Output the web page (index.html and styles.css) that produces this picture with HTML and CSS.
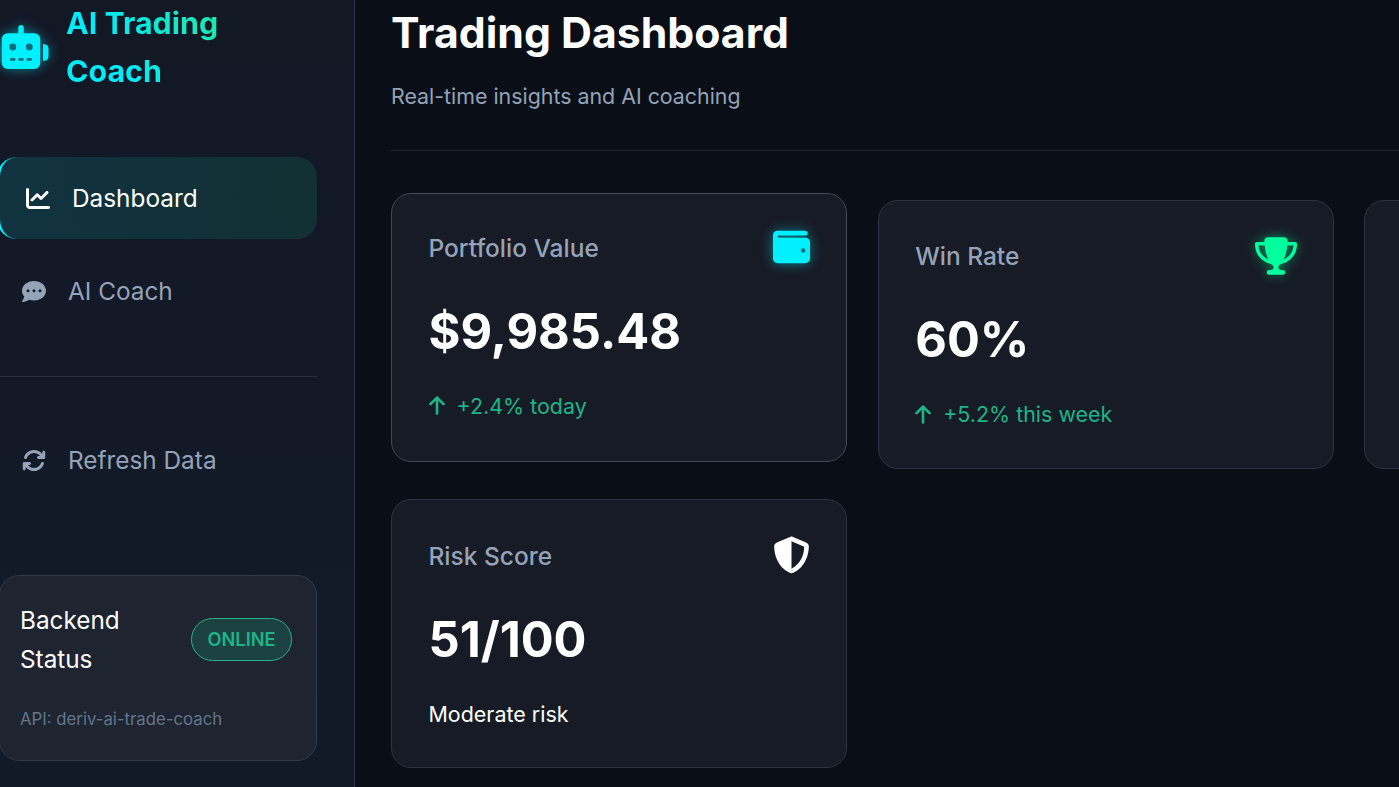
FILE: index.html
```html
<!DOCTYPE html>
<html>
	<head>
		<meta charset="UTF-8">
		<title>AI Trading Coach</title>
		<link rel="stylesheet" href="styles.css">
	</head>
	<body>
		<div class="app">
			<aside class="sidebar">
				<div class="logo">
					<svg class="logo-icon" viewBox="0 0 640 512"><path d="M320 0c17.7 0 32 14.3 32 32V96H472c39.8 0 72 32.2 72 72V440c0 39.8-32.2 72-72 72H168c-39.8 0-72-32.2-72-72V168c0-39.8 32.2-72 72-72H288V32c0-17.7 14.3-32 32-32zM208 384c-8.8 0-16 7.2-16 16s7.2 16 16 16h32c8.8 0 16-7.2 16-16s-7.2-16-16-16H208zm96 0c-8.8 0-16 7.2-16 16s7.2 16 16 16h32c8.8 0 16-7.2 16-16s-7.2-16-16-16H304zm96 0c-8.8 0-16 7.2-16 16s7.2 16 16 16h32c8.8 0 16-7.2 16-16s-7.2-16-16-16H400zM264 256a40 40 0 1 0 -80 0 40 40 0 1 0 80 0zm152 40a40 40 0 1 0 0-80 40 40 0 1 0 0 80zM48 224H64V416H48c-26.5 0-48-21.5-48-48V272c0-26.5 21.5-48 48-48zm544 0c26.5 0 48 21.5 48 48v96c0 26.5-21.5 48-48 48H576V224h16z"/></svg>
					<span class="logo-text">AI Trading Coach</span>
				</div>
				<nav class="nav">
					<a class="nav-item active">
						<svg class="nav-icon" viewBox="0 0 512 512"><path d="M64 64c0-17.7-14.3-32-32-32S0 46.3 0 64V400c0 44.2 35.8 80 80 80H480c17.7 0 32-14.3 32-32s-14.3-32-32-32H80c-8.8 0-16-7.2-16-16V64zm406.6 86.6c12.5-12.5 12.5-32.8 0-45.3s-32.8-12.5-45.3 0L320 210.7l-57.4-57.4c-12.5-12.5-32.8-12.5-45.3 0l-112 112c-12.5 12.5-12.5 32.8 0 45.3s32.8 12.5 45.3 0L240 221.3l57.4 57.4c12.5 12.5 32.8 12.5 45.3 0l128-128z"/></svg>
						Dashboard
					</a>
					<a class="nav-item">
						<svg class="nav-icon" viewBox="0 0 512 512"><path d="M256 448c141.4 0 256-93.1 256-208S397.4 32 256 32S0 125.1 0 240c0 45.1 17.7 86.8 47.7 120.9c-1.9 24.5-11.4 46.3-21.4 62.9c-5.5 9.2-11.1 16.6-15.2 21.6c-2.1 2.5-3.7 4.4-4.9 5.7c-.6 .6-1 1.1-1.3 1.4l-.3 .3 0 0 0 0 0 0 0 0c-4.6 4.6-5.9 11.4-3.4 17.4c2.5 6 8.3 9.9 14.8 9.9c28.7 0 57.6-8.9 81.6-19.3c22.9-9.9 42.4-21.9 54.3-30.6c31.8 11.5 67 17.9 104.1 17.9zM128 208a32 32 0 1 1 0 64 32 32 0 1 1 0-64zm128 0a32 32 0 1 1 0 64 32 32 0 1 1 0-64zm96 32a32 32 0 1 1 64 0 32 32 0 1 1 -64 0z"/></svg>
						AI Coach
					</a>
				</nav>
				<div class="divider"></div>
				<a class="nav-item refresh">
					<svg class="nav-icon" viewBox="0 0 512 512"><path d="M105.1 202.6c7.7-21.8 20.2-42.3 37.8-59.8c62.5-62.5 163.8-62.5 226.3 0L386.3 160H352c-17.7 0-32 14.3-32 32s14.3 32 32 32H463.5c0 0 0 0 0 0h.4c17.7 0 32-14.3 32-32V80c0-17.7-14.3-32-32-32s-32 14.3-32 32v35.2L414.4 97.6c-87.5-87.5-229.3-87.5-316.8 0C73.2 122 55.6 150.7 44.8 181.4c-5.9 16.7 2.9 34.9 19.5 40.8s34.9-2.9 40.8-19.5zM39 289.3c-5 1.5-9.8 4.2-13.7 8.2c-4 4-6.7 8.8-8.1 14c-.3 1.2-.6 2.5-.8 3.8c-.3 1.7-.4 3.4-.4 5.1V432c0 17.7 14.3 32 32 32s32-14.3 32-32V396.9l17.6 17.5 0 0c87.5 87.4 229.3 87.4 316.7 0c24.4-24.4 42.1-53.1 52.9-83.7c5.9-16.7-2.9-34.9-19.5-40.8s-34.9 2.9-40.8 19.5c-7.7 21.8-20.2 42.3-37.8 59.8c-62.5 62.5-163.8 62.5-226.3 0l-.1-.1L125.6 352H160c17.7 0 32-14.3 32-32s-14.3-32-32-32H48.4c-1.6 0-3.2 .1-4.8 .3s-3.1 .5-4.6 1z"/></svg>
					Refresh Data
				</a>
				<div class="status-card">
					<div class="status-top">
						<span class="status-title">Backend Status</span>
						<span class="badge">ONLINE</span>
					</div>
					<div class="status-api">API: deriv-ai-trade-coach</div>
				</div>
			</aside>
			<main class="main">
				<header class="page-head">
					<h1>Trading Dashboard</h1>
					<p>Real-time insights and AI coaching</p>
				</header>
				<section class="cards">
					<div class="card lifted">
						<div class="card-top">
							<span class="card-label">Portfolio Value</span>
							<svg class="card-icon cyan" viewBox="0 0 512 512"><path d="M64 32C28.7 32 0 60.7 0 96V416c0 35.3 28.7 64 64 64H448c35.3 0 64-28.7 64-64V192c0-35.3-28.7-64-64-64H80c-8.8 0-16-7.2-16-16s7.2-16 16-16H448c17.7 0 32-14.3 32-32s-14.3-32-32-32H64zM416 272a32 32 0 1 1 0 64 32 32 0 1 1 0-64z"/></svg>
						</div>
						<div class="card-value">$9,985.48</div>
						<div class="card-change">
							<svg class="arrow" viewBox="0 0 384 512"><path d="M214.6 41.4c-12.5-12.5-32.8-12.5-45.3 0l-160 160c-12.5 12.5-12.5 32.8 0 45.3s32.8 12.5 45.3 0L160 141.2V448c0 17.7 14.3 32 32 32s32-14.3 32-32V141.2L329.4 246.6c12.5 12.5 32.8 12.5 45.3 0s12.5-32.8 0-45.3l-160-160z"/></svg>
							+2.4% today
						</div>
					</div>
					<div class="card">
						<div class="card-top">
							<span class="card-label">Win Rate</span>
							<svg class="card-icon green trophy" viewBox="0 0 576 512"><path d="M400 0H176c-26.5 0-48.1 21.8-47.1 48.2c.2 5.3 .4 10.6 .7 15.8H24C10.7 64 0 74.7 0 88c0 92.6 33.5 157 78.5 200.7c44.3 43.1 98.3 64.8 138.1 75.8c23.4 6.5 39.4 26 39.4 45.6c0 20.9-17 37.9-37.9 37.9H192c-17.7 0-32 14.3-32 32s14.3 32 32 32H384c17.7 0 32-14.3 32-32s-14.3-32-32-32H357.9C337 448 320 431 320 410.1c0-19.6 15.9-39.2 39.4-45.6c39.9-11 93.9-32.7 138.2-75.8C542.5 245 576 180.6 576 88c0-13.3-10.7-24-24-24H446.4c.3-5.2 .5-10.4 .7-15.8C448.1 21.8 426.5 0 400 0zM48.9 112h84.4c9.1 90.1 29.2 150.3 51.9 190.6c-24.9-11-50.8-26.5-73.2-48.3c-32-31.1-58-76-63-142.3zM464.1 254.3c-22.4 21.8-48.3 37.3-73.2 48.3c22.7-40.3 42.8-100.5 51.9-190.6h84.4c-5.1 66.3-31.1 111.2-63 142.3z"/></svg>
						</div>
						<div class="card-value">60%</div>
						<div class="card-change">
							<svg class="arrow" viewBox="0 0 384 512"><path d="M214.6 41.4c-12.5-12.5-32.8-12.5-45.3 0l-160 160c-12.5 12.5-12.5 32.8 0 45.3s32.8 12.5 45.3 0L160 141.2V448c0 17.7 14.3 32 32 32s32-14.3 32-32V141.2L329.4 246.6c12.5 12.5 32.8 12.5 45.3 0s12.5-32.8 0-45.3l-160-160z"/></svg>
							+5.2% this week
						</div>
					</div>
					<div class="card"></div>
					<div class="card">
						<div class="card-top">
							<span class="card-label">Risk Score</span>
							<svg class="card-icon white" viewBox="0 0 512 512"><path d="M256 0c4.6 0 9.2 1 13.4 2.9L457.7 82.8c22 9.3 38.4 31 38.3 57.2c-.5 99.2-41.3 280.7-213.6 363.2c-16.7 8-36.1 8-52.8 0C57.3 420.7 16.5 239.2 16 140c-.1-26.2 16.3-47.9 38.3-57.2L242.7 2.9C246.8 1 251.4 0 256 0zm0 66.8V444.8C394 378 431.1 230.1 432 141.4L256 66.8l0 0z"/></svg>
						</div>
						<div class="card-value">51/100</div>
						<div class="card-note">Moderate risk</div>
					</div>
				</section>
			</main>
		</div>
	</body>
</html>
```

FILE: styles.css
```css
*{
	box-sizing: border-box;
}
html,body{
	margin: 0;
	height: 100%;
	overflow: hidden;
	background: #0a0e17;
	font-family: Inter, "Liberation Sans", sans-serif;
}
.app{
	display: flex;
	height: 787px;
	overflow: hidden;
}

/* sidebar */
.sidebar{
	flex: 0 0 355px;
	height: 787px;
	padding: 0 37px 0 0;
	background: linear-gradient(180deg, #131825, #121a28);
	border-right: 1px solid #2d3340;
}
.logo{
	display: flex;
	align-items: center;
	gap: 17px;
	height: 94px;
}
.logo-icon{
	flex: none;
	width: 56px;
	height: 44px;
	margin: 0 0 0 -7px;
	fill: #00f0ff;
	filter: drop-shadow(0 0 6px rgba(0,240,255,.5));
}
.logo-text{
	width: 155px;
	font-size: 30.4px;
	font-weight: 700;
	line-height: 48px;
	background: linear-gradient(60deg, #00ecfa 35%, #22e6a4);
	-webkit-background-clip: text;
	background-clip: text;
	color: transparent;
}
.nav{
	display: flex;
	flex-direction: column;
	gap: 11.5px;
	margin-top: 63px;
}
.nav-item{
	display: flex;
	align-items: center;
	gap: 22px;
	height: 81px;
	padding-left: 22px;
	font-size: 24.35px;
	color: #94a3b8;
}
.nav-item.active{
	height: 82px;
	margin-left: -3px;
	padding-left: 26px;
	color: #fff;
	background: linear-gradient(90deg, rgba(0,240,255,.12), rgba(16,185,129,.15));
	border-left: 3px solid #00f0ff;
	border-radius: 20px;
}
.nav-icon{
	flex: none;
	width: 24px;
	height: 25px;
	fill: currentColor;
}
.divider{
	height: 1px;
	margin-top: 44.5px;
	background: #2a303c;
}
.refresh{
	margin-top: 42.5px;
}
.status-card{
	height: 186px;
	margin: 74.5px 0 0 -1px;
	padding: 25px 24px 0 20px;
	background: #1e2430;
	border: 1px solid #333a47;
	border-radius: 20px;
}
.status-top{
	display: flex;
	align-items: center;
	justify-content: space-between;
}
.status-title{
	width: 130px;
	font-size: 24.3px;
	line-height: 39px;
	color: #fff;
}
.badge{
	margin-bottom: 2px;
	padding: 8px 15.5px;
	font-size: 18.2px;
	font-weight: 600;
	line-height: 25px;
	color: #1db588;
	background: rgba(16,185,129,.2);
	border: 1px solid #2bb48c;
	border-radius: 26px;
}
.status-api{
	margin-top: 30px;
	font-size: 16.75px;
	color: #64748b;
}

/* main */
.main{
	flex: 1;
	min-width: 0;
	padding-left: 36px;
}
.page-head{
	height: 151px;
	border-bottom: 1px solid #1f2530;
	padding-top: 6px;
}
.page-head h1{
	margin: 0;
	font-size: 42.75px;
	font-weight: 700;
	line-height: 54px;
	color: #fff;
}
.page-head p{
	margin: 22px 0 0;
	font-size: 21.37px;
	line-height: 28px;
	color: #94a3b8;
}
.cards{
	display: grid;
	grid-template-columns: repeat(3, 456.2px);
	gap: 30.4px 30.5px;
	margin-top: 48.8px;
}
.card{
	height: 269px;
	padding: 37.5px 36px 0 36.5px;
	background: #171b25;
	border: 1px solid #2d3340;
	border-radius: 20px;
}
.card.lifted{
	transform: translateY(-7px);
	border-color: #424854;
}
.lifted .card-top{
	margin-top: -1px;
}
.card-top{
	display: flex;
	align-items: flex-start;
	justify-content: space-between;
}
.card-label{
	font-size: 24.5px;
	font-weight: 500;
	line-height: 36px;
	color: #94a3b8;
}
.card-icon{
	flex: none;
	width: 37px;
	height: 38px;
	margin-top: -1.5px;
}
.lifted .card-icon{
	margin-top: -2.5px;
}
.card-icon.trophy{
	width: 42px;
}
.cyan{
	fill: #00f0ff;
	filter: drop-shadow(0 0 6px rgba(0,240,255,.5));
}
.green{
	fill: #00ff9d;
	filter: drop-shadow(0 0 6px rgba(0,255,157,.5));
}
.white{
	fill: #fff;
}
.card-value{
	margin-top: 33.4px;
	font-size: 48.8px;
	font-weight: 700;
	line-height: 64px;
	color: #fff;
}
.card-change{
	display: flex;
	align-items: center;
	gap: 12px;
	margin-top: 24px;
	font-size: 21.45px;
	line-height: 36px;
	color: #1db588;
}
.arrow{
	width: 16px;
	height: 21px;
	fill: currentColor;
}
.card-note{
	margin-top: 24.4px;
	font-size: 21.45px;
	line-height: 36px;
	color: #fff;
}
```
